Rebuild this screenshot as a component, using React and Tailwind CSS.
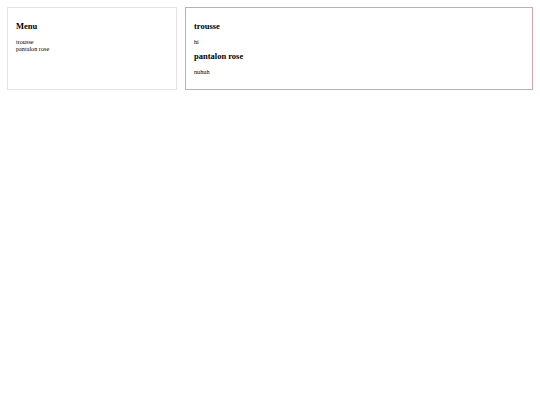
import React from "react";

const items = [
  { title: "trousse", body: "hi" },
  { title: "pantalon rose", body: "nuhuh" },
];

export default function App() {
  return (
    <div className="flex gap-[8px] p-[7px] font-['Liberation_Serif',serif] text-black">
      <div className="w-[170px] shrink-0 border border-[#ecdfe1] px-[8px] pt-[12px]">
        <h2 className="text-[8.5px] leading-[12px] font-bold">Menu</h2>
        <ul className="mt-[5.5px] text-[6.2px] leading-[7px]">
          {items.map((it) => (
            <li key={it.title}>{it.title}</li>
          ))}
        </ul>
      </div>
      <div className="flex-1 border border-[#d9a2a4] px-[8px] pt-[12px] pb-[14px]">
        {items.map((it, i) => (
          <div key={it.title} className={i > 0 ? "mt-[5.5px]" : ""}>
            <h2 className="text-[8.5px] leading-[12px] font-bold">{it.title}</h2>
            <p className="mt-[5.5px] text-[6.2px] leading-[7px]">{it.body}</p>
          </div>
        ))}
      </div>
    </div>
  );
}
